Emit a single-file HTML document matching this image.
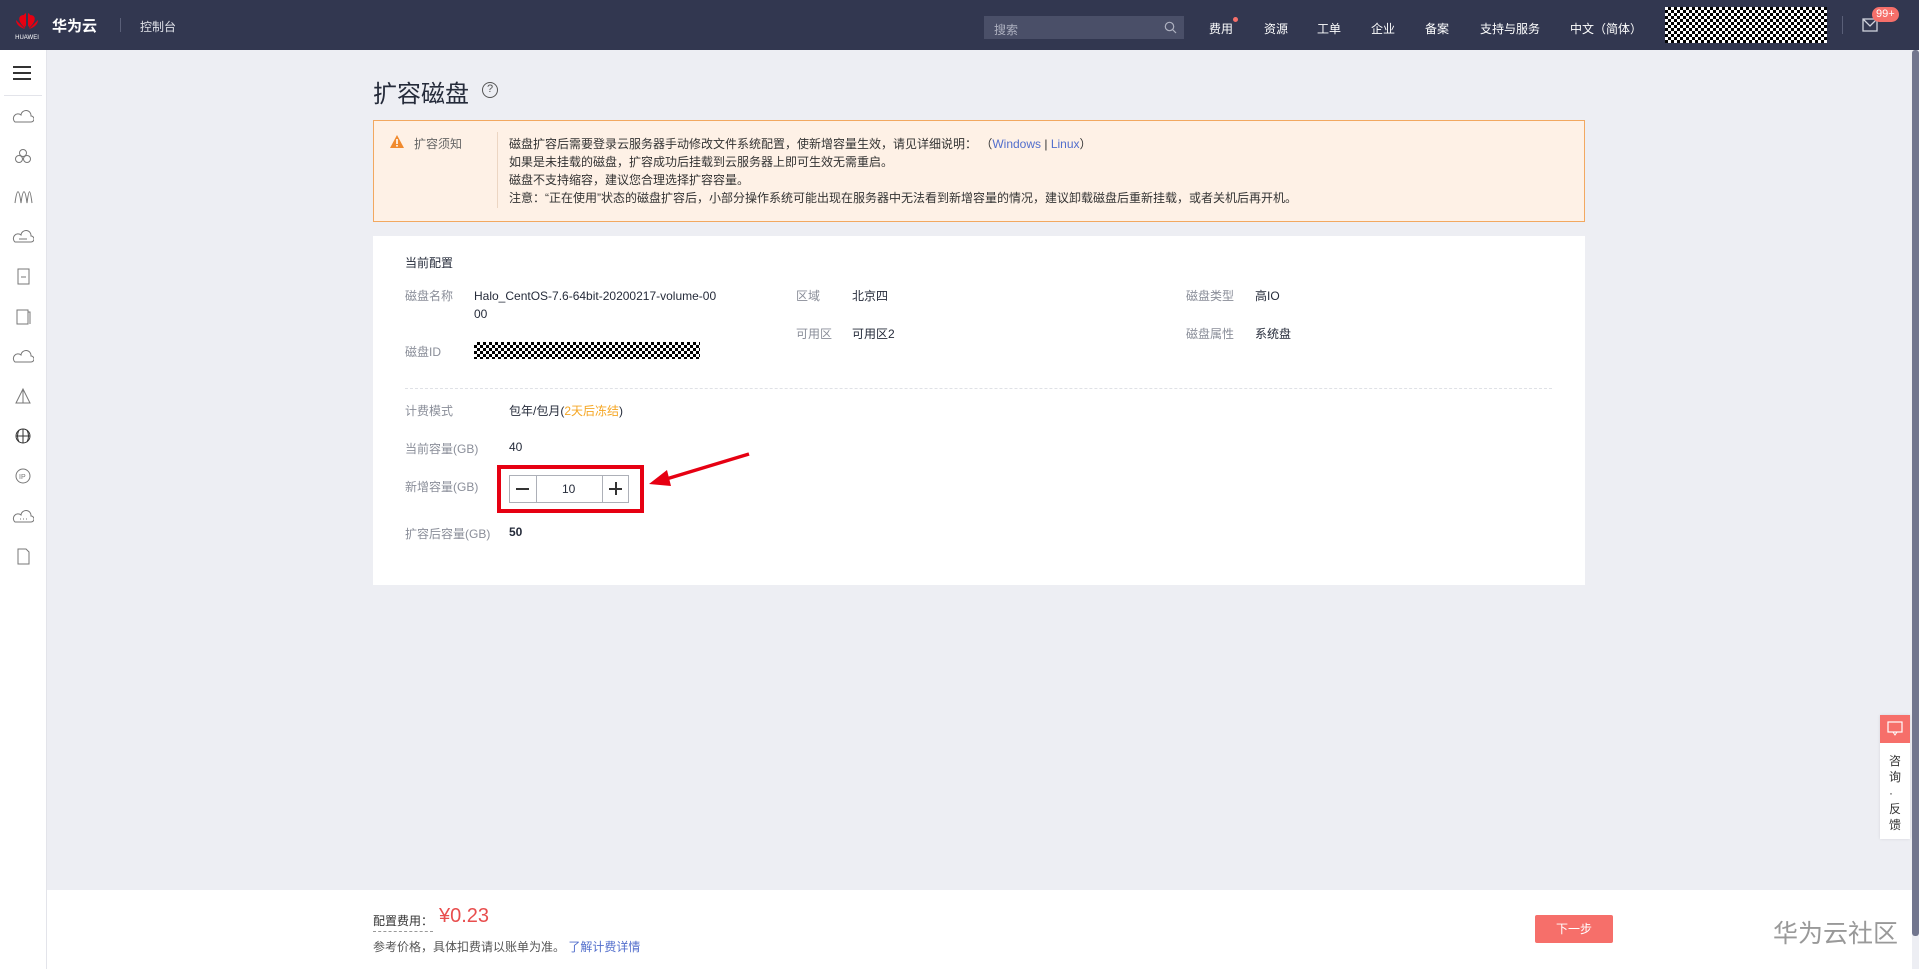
<!DOCTYPE html>
<html><head><meta charset="utf-8"><style>
*{margin:0;padding:0;box-sizing:border-box}
body{width:1919px;height:969px;overflow:hidden;background:#edeef3;font-family:"Liberation Sans","Noto Sans CJK SC",sans-serif;font-size:12px;color:#252b3a;position:relative}
.a{position:absolute;white-space:nowrap}
.hd{left:0;top:0;width:1919px;height:50px;background:#323750}
.nv{position:absolute;white-space:nowrap;color:#fff;font-size:12px;top:20px}
.side{left:0;top:50px;width:47px;height:919px;background:#fff;border-right:1px solid #e3e4ea}
.lb{color:#8a8e99}
.chk{background-color:#fff;background-image:linear-gradient(45deg,#000 25%,transparent 25%,transparent 75%,#000 75%),linear-gradient(45deg,#000 25%,transparent 25%,transparent 75%,#000 75%);background-size:6px 6px;background-position:0 0,3px 3px}
</style></head><body>
<div class="a hd"></div>
<svg class="a" style="left:12px;top:9px" width="30" height="32" viewBox="0 0 30 32"><g fill="#e60012"><path d="M14 4 C10 6 10 12 14 18 Z"/><path d="M16 4 C20 6 20 12 16 18 Z"/><path d="M12 6 C6 6 5 12 13 19 Z"/><path d="M18 6 C24 6 25 12 17 19 Z"/><path d="M4 11 C4 16 9 19 13 20 Z"/><path d="M26 11 C26 16 21 19 17 20 Z"/></g><text x="15" y="30" font-size="6" fill="#fff" text-anchor="middle" font-family="Liberation Sans">HUAWEI</text></svg>
<div class="a" style="left:52px;top:15px;color:#fff;font-size:15px;font-weight:bold">华为云</div>
<div class="a" style="left:120px;top:18px;width:1px;height:14px;background:#5a5f78"></div>
<div class="a" style="left:140px;top:18px;color:#dfe1e8;font-size:12px">控制台</div>
<div class="a" style="left:984px;top:16px;width:200px;height:23px;background:#4a4f68"></div>
<div class="a" style="left:994px;top:21px;color:#aeb1c0;font-size:12px">搜索</div>
<svg class="a" style="left:1164px;top:21px" width="13" height="13"><circle cx="5.5" cy="5.5" r="4.2" stroke="#aeb1c0" stroke-width="1.2" fill="none"/><path d="M8.5 8.5L12 12" stroke="#aeb1c0" stroke-width="1.2"/></svg>
<div class="nv" style="left:1209px">费用</div>
<div class="a" style="left:1233px;top:17px;width:5px;height:5px;border-radius:50%;background:#f66f6a"></div>
<div class="nv" style="left:1264px">资源</div>
<div class="nv" style="left:1317px">工单</div>
<div class="nv" style="left:1371px">企业</div>
<div class="nv" style="left:1425px">备案</div>
<div class="nv" style="left:1480px">支持与服务</div>
<div class="nv" style="left:1570px">中文（简体）</div>
<div class="a chk" style="left:1665px;top:7px;width:162px;height:36px"></div>
<div class="a" style="left:1842px;top:16px;width:1px;height:18px;background:#5a5f78"></div>
<svg class="a" style="left:1862px;top:18px" width="16" height="14"><rect x="1" y="1" width="14" height="12" fill="none" stroke="#d0d2dc" stroke-width="1.3"/><path d="M1 1L8 8L15 1" fill="none" stroke="#d0d2dc" stroke-width="1.3"/></svg>
<div class="a" style="left:1872px;top:7px;height:15px;padding:0 4px;border-radius:8px;background:#f66f6a;color:#fff;font-size:11px;line-height:15px">99+</div>

<div class="a side"></div>
<div class="a" style="left:13px;top:66px;width:18px;height:2px;background:#333;box-shadow:0 6px 0 #333,0 12px 0 #333"></div>
<div class="a" style="left:4px;top:95px;width:38px;height:1px;background:#e3e4ea"></div>
<svg class="a" style="left:12px;top:108px" width="22" height="460" fill="none" stroke="#777" stroke-width="1">
<path d="M3 14h16a3 3 0 0 0 0-6 5 5 0 0 0-10-1 4 4 0 0 0-6 7z"/>
<g transform="translate(0,40)"><circle cx="11" cy="5" r="3.5"/><circle cx="7" cy="11" r="3.5"/><circle cx="15" cy="11" r="3.5"/></g>
<g transform="translate(0,80)"><path d="M3 15C5 0 7 0 9 15C11 0 13 0 15 15C17 0 18 0 20 15"/></g>
<g transform="translate(0,120)"><path d="M3 14h16a3 3 0 0 0 0-6 5 5 0 0 0-10-1 4 4 0 0 0-6 7z"/><path d="M7 11h8"/></g>
<g transform="translate(0,160)"><rect x="6" y="1" width="11" height="15"/><path d="M9 9h5"/></g>
<g transform="translate(0,200)"><rect x="5" y="2" width="11" height="14"/><path d="M16 4h2v12"/></g>
<g transform="translate(0,240)"><path d="M3 14h16a3 3 0 0 0 0-6 5 5 0 0 0-10-1 4 4 0 0 0-6 7z"/></g>
<g transform="translate(0,280)"><path d="M11 1L4 15h14z M11 1v14"/></g>
<g transform="translate(0,320)" stroke="#333"><circle cx="11" cy="8" r="7"/><path d="M4 8h14M11 1v14M7 2c-2 4-2 8 0 12M15 2c2 4 2 8 0 12"/></g>
<g transform="translate(0,360)"><circle cx="11" cy="8" r="7"/><text x="7" y="11" font-size="7" fill="#777" stroke="none">IP</text></g>
<g transform="translate(0,400)"><path d="M3 14h16a3 3 0 0 0 0-6 5 5 0 0 0-10-1 4 4 0 0 0-6 7z"/><path d="M8 11h1M11 11h1M14 11h1"/></g>
<g transform="translate(0,440)"><path d="M6 1h8l3 3v12H6z"/></g>
</svg>

<div class="a" style="left:373px;top:74px;font-size:24px;color:#252b3a">扩容磁盘</div>
<div class="a" style="left:482px;top:82px;width:16px;height:16px;border:1.3px solid #555;border-radius:50%;font-size:11px;line-height:13px;text-align:center;color:#555">?</div>

<div class="a" style="left:373px;top:120px;width:1212px;height:102px;background:#fef1e6;border:1px solid #f2a860"></div>
<svg class="a" style="left:389px;top:134px" width="16" height="15"><path d="M8 1L15 14H1z" fill="#f08a2e"/><rect x="7.2" y="5" width="1.6" height="5" fill="#fff"/><rect x="7.2" y="11" width="1.6" height="1.6" fill="#fff"/></svg>
<div class="a" style="left:414px;top:135px;color:#666">扩容须知</div>
<div class="a" style="left:497px;top:132px;width:1px;height:76px;background:#ecd6c3"></div>
<div class="a" style="left:509px;top:135px;line-height:18px;color:#333">磁盘扩容后需要登录云服务器手动修改文件系统配置，使新增容量生效，请见详细说明： （<span style="color:#526ecc">Windows</span> | <span style="color:#526ecc">Linux</span>）<br>如果是未挂载的磁盘，扩容成功后挂载到云服务器上即可生效无需重启。<br>磁盘不支持缩容，建议您合理选择扩容容量。<br>注意：“正在使用”状态的磁盘扩容后，小部分操作系统可能出现在服务器中无法看到新增容量的情况，建议卸载磁盘后重新挂载，或者关机后再开机。</div>

<div class="a" style="left:373px;top:236px;width:1212px;height:349px;background:#fff"></div>
<div class="a" style="left:405px;top:254px;color:#252b3a">当前配置</div>
<div class="a lb" style="left:405px;top:287px">磁盘名称</div>
<div class="a" style="left:474px;top:287px;line-height:18px">Halo_CentOS-7.6-64bit-20200217-volume-00<br>00</div>
<div class="a lb" style="left:405px;top:343px">磁盘ID</div>
<div class="a chk" style="left:474px;top:342px;width:226px;height:17px"></div>
<div class="a lb" style="left:796px;top:287px">区域</div>
<div class="a" style="left:852px;top:287px">北京四</div>
<div class="a lb" style="left:796px;top:325px">可用区</div>
<div class="a" style="left:852px;top:325px">可用区2</div>
<div class="a lb" style="left:1186px;top:287px">磁盘类型</div>
<div class="a" style="left:1255px;top:287px">高IO</div>
<div class="a lb" style="left:1186px;top:325px">磁盘属性</div>
<div class="a" style="left:1255px;top:325px">系统盘</div>
<div class="a" style="left:405px;top:388px;width:1147px;border-top:1px dashed #dfe1e6"></div>
<div class="a lb" style="left:405px;top:402px">计费模式</div>
<div class="a" style="left:509px;top:402px">包年/包月(<span style="color:#f5a623">2天后冻结</span>)</div>
<div class="a lb" style="left:405px;top:440px">当前容量(GB)</div>
<div class="a" style="left:509px;top:440px">40</div>
<div class="a lb" style="left:405px;top:478px">新增容量(GB)</div>
<div class="a" style="left:497px;top:465px;width:147px;height:48px;border:4px solid #e60012"></div>
<div class="a" style="left:509px;top:475px;width:120px;height:28px;border:1px solid #adb0b8;background:#fff"></div>
<div class="a" style="left:536px;top:475px;width:1px;height:28px;background:#adb0b8"></div>
<div class="a" style="left:602px;top:475px;width:1px;height:28px;background:#adb0b8"></div>
<div class="a" style="left:516px;top:488px;width:13px;height:1.5px;background:#333"></div>
<div class="a" style="left:609px;top:488px;width:13px;height:1.5px;background:#333"></div>
<div class="a" style="left:615px;top:482px;width:1.5px;height:13px;background:#333"></div>
<div class="a" style="left:562px;top:482px">10</div>
<svg class="a" style="left:645px;top:450px" width="110" height="40"><path d="M104 4L18 30" stroke="#e60012" stroke-width="3.5"/><path d="M4 34L22 20L26 36z" fill="#e60012"/></svg>
<div class="a lb" style="left:405px;top:525px">扩容后容量(GB)</div>
<div class="a" style="left:509px;top:525px;font-weight:bold">50</div>

<div class="a" style="left:47px;top:890px;width:1865px;height:79px;background:#fff"></div>
<div class="a" style="left:373px;top:912px;color:#333;border-bottom:1px dashed #999;padding-bottom:2px;width:60px">配置费用：</div>
<div class="a" style="left:439px;top:905px;color:#e84e4e;font-size:20px">¥0.23</div>
<div class="a" style="left:373px;top:938px;color:#555">参考价格，具体扣费请以账单为准。 <span style="color:#526ecc">了解计费详情</span></div>
<div class="a" style="left:1535px;top:915px;width:78px;height:28px;background:#f66f6a;border-radius:2px;color:#fff;text-align:center;line-height:28px">下一步</div>
<div class="a" style="left:1773px;top:914px;font-size:25px;color:#999">华为云社区</div>

<div class="a" style="left:1880px;top:715px;width:30px;height:124px;background:#fff;box-shadow:0 0 3px rgba(0,0,0,.1)"></div>
<div class="a" style="left:1880px;top:715px;width:30px;height:28px;background:#f66f6a"></div>
<svg class="a" style="left:1887px;top:721px" width="16" height="15"><rect x="1" y="1" width="14" height="10" fill="none" stroke="#fff" stroke-width="1.2"/><path d="M6 11l2 3 2-3" stroke="#fff" fill="none"/></svg>
<div class="a" style="left:1889px;top:753px;font-size:12px;line-height:16px;color:#333;width:12px;white-space:normal">咨询·反馈</div>
<div class="a" style="left:1912px;top:50px;width:7px;height:886px;background:#72768e;border-radius:3px"></div>
</body></html>
